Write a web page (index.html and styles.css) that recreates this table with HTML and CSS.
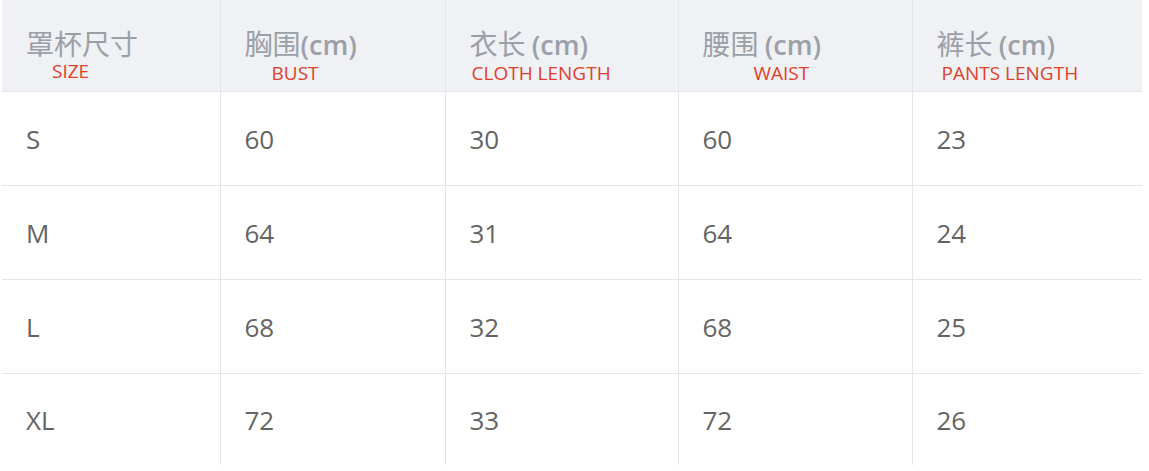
FILE: index.html
```html
<!DOCTYPE html>
<html lang="zh-CN">
<head>
<meta charset="utf-8">
<title>尺码表</title>
<link rel="stylesheet" href="styles.css">
</head>
<body>
<table class="size-table">
  <colgroup>
    <col class="c1"><col class="c2"><col class="c3"><col class="c4"><col class="c5">
  </colgroup>
  <thead>
    <tr>
      <th><div class="zh">罩杯尺寸</div><div class="en en-size">SIZE</div></th>
      <th><div class="zh">胸围<span class="lat">(cm)</span></div><div class="en en-bust">BUST</div></th>
      <th><div class="zh">衣长 <span class="lat">(cm)</span></div><div class="en en-cloth">CLOTH LENGTH</div></th>
      <th><div class="zh">腰围 <span class="lat">(cm)</span></div><div class="en en-waist">WAIST</div></th>
      <th><div class="zh">裤长 <span class="lat">(cm)</span></div><div class="en en-pants">PANTS LENGTH</div></th>
    </tr>
  </thead>
  <tbody>
    <tr><td>S</td><td>60</td><td>30</td><td>60</td><td>23</td></tr>
    <tr><td>M</td><td>64</td><td>31</td><td>64</td><td>24</td></tr>
    <tr><td>L</td><td>68</td><td>32</td><td>68</td><td>25</td></tr>
    <tr><td>XL</td><td>72</td><td>33</td><td>72</td><td>26</td></tr>
  </tbody>
</table>
</body>
</html>
```

FILE: styles.css
```css
html, body {
  margin: 0;
  padding: 0;
  background: #ffffff;
}

body {
  font-family: "Open Sans", "Noto Sans CJK SC", sans-serif;
}

.size-table {
  margin-left: 2px;
  width: 1140px;
  border-collapse: collapse;
  table-layout: fixed;
}

.c1 { width: 218px; }
.c2 { width: 225px; }
.c3 { width: 233px; }
.c4 { width: 234px; }
.c5 { width: 230px; }

.size-table th {
  background: #eff1f4;
  height: 91px;
  padding: 0 0 0 24px;
  text-align: left;
  vertical-align: top;
  border-left: 1px solid #e2e5ea;
  border-bottom: 1px solid #e2e5ea;
  font-weight: normal;
}

.size-table th:first-child,
.size-table td:first-child {
  border-left: none;
}

.zh {
  margin-top: 29px;
  font-family: "Noto Sans CJK SC", "Open Sans", sans-serif;
  font-size: 28px;
  line-height: 28px;
  color: #9ba0a8;
  white-space: nowrap;
}

.lat {
  font-family: "Open Sans", sans-serif;
  font-weight: 600;
  font-size: 27px;
  color: #9ba0a8;
}

.en {
  margin-top: 3px;
  font-family: "Open Sans", sans-serif;
  font-size: 19px;
  line-height: 22px;
  color: #e0402a;
  white-space: nowrap;
}

.en-size { margin-left: 26px; }
.en-bust { margin-left: 27px; }
.en-cloth { margin-left: 2px; }
.en-waist { margin-left: 51px; }
.en-pants { margin-left: 5px; }

.size-table td {
  height: 93px;
  padding: 0 0 0 24px;
  border-left: 1px solid #e2e5ea;
  border-bottom: 1px solid #e2e5ea;
  font-family: "Open Sans", sans-serif;
  font-size: 26px;
  color: #646464;
  vertical-align: middle;
}

.size-table tbody tr:last-child td {
  border-bottom: none;
  height: 91px;
}
```
